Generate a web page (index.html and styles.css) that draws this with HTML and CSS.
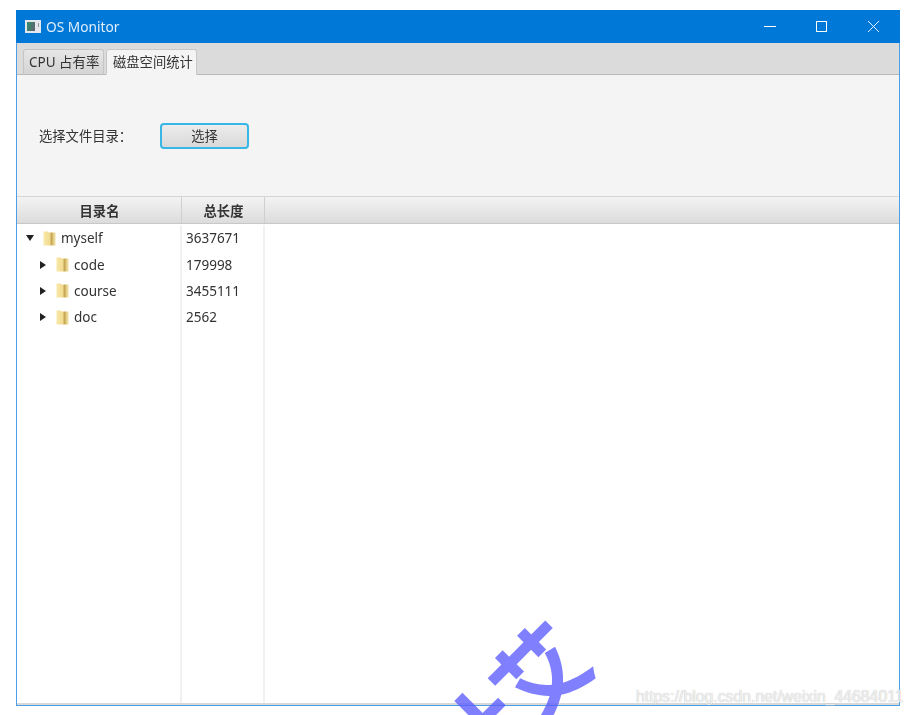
FILE: index.html
```html
<!DOCTYPE html>
<html lang="zh">
<head>
<meta charset="utf-8">
<title>OS Monitor</title>
<link rel="stylesheet" href="styles.css">
</head>
<body>
<svg width="0" height="0" class="defs">
  <defs>
    <linearGradient id="fold" x1="0" y1="0" x2="1" y2="0">
      <stop offset="0" stop-color="#f8e8a8"/>
      <stop offset="0.5" stop-color="#f2dc92"/>
      <stop offset="0.68" stop-color="#c4a452"/>
      <stop offset="0.85" stop-color="#e8d28c"/>
      <stop offset="1" stop-color="#f0e0a4"/>
    </linearGradient>
    <symbol id="folder" viewBox="0 0 13 15">
      <path d="M0.500 0.500h4l1 1h7v13h-12z" fill="url(#fold)"/>
    </symbol>
  </defs>
</svg>
<div class="window">
  <header class="titlebar">
    <svg class="app-icon" width="16" height="13" viewBox="0 0 16 13">
      <defs>
        <linearGradient id="scr" x1="0" y1="0" x2="1" y2="0.4">
          <stop offset="0" stop-color="#2e8f6c"/>
          <stop offset="1" stop-color="#5a6a72"/>
        </linearGradient>
      </defs>
      <rect width="16" height="13" fill="#e4e8ec"/>
      <rect x="2" y="2" width="8" height="9" fill="url(#scr)"/>
      <rect x="13" y="3" width="1" height="4" fill="#8a949c"/>
    </svg>
    <span class="app-title">OS Monitor</span>
    <div class="controls">
      <svg class="ctl" width="52" height="33" viewBox="0 0 52 33"><path d="M20 16.500h12" stroke="#fff" fill="none"/></svg>
      <svg class="ctl" width="52" height="33" viewBox="0 0 52 33"><rect x="20.500" y="11.500" width="10" height="10" stroke="#fff" fill="none"/></svg>
      <svg class="ctl" width="52" height="33" viewBox="0 0 52 33"><path d="M20 11l11 11M31 11l-11 11" stroke="#e4eef8" fill="none"/></svg>
    </div>
  </header>
  <nav class="tabbar">
    <div class="tab">CPU 占有率</div>
    <div class="tab tab-active">磁盘空间统计</div>
  </nav>
  <section class="panel">
    <span class="panel-label">选择文件目录：</span>
    <button class="btn">选择</button>
  </section>
  <div class="table-head">
    <div class="th col-a">目录名</div>
    <div class="th col-b">总长度</div>
    <div class="th col-c"></div>
  </div>
  <div class="table-body">
    <div class="row">
      <div class="cell col-a depth-0"><span class="arrow arrow-down"></span><svg class="ficon"><use href="#folder"/></svg><span>myself</span></div>
      <div class="cell col-b">3637671</div>
    </div>
    <div class="row">
      <div class="cell col-a depth-1"><span class="arrow arrow-right"></span><svg class="ficon"><use href="#folder"/></svg><span>code</span></div>
      <div class="cell col-b">179998</div>
    </div>
    <div class="row">
      <div class="cell col-a depth-1"><span class="arrow arrow-right"></span><svg class="ficon"><use href="#folder"/></svg><span>course</span></div>
      <div class="cell col-b">3455111</div>
    </div>
    <div class="row">
      <div class="cell col-a depth-1"><span class="arrow arrow-right"></span><svg class="ficon"><use href="#folder"/></svg><span>doc</span></div>
      <div class="cell col-b">2562</div>
    </div>
    <div class="row row-fill">
      <div class="cell col-a"></div>
      <div class="cell col-b"></div>
    </div>
  </div>
</div>
<div class="stamp stamp-a">艾</div>
<div class="stamp stamp-b">叶</div>
<div class="mark">https://blog.csdn.net/weixin_44684011</div>
</body>
</html>
```
FILE: styles.css
```css
html, body {
  margin: 0;
  height: 715px;
  overflow: hidden;
  background: #fff;
}
body {
  position: relative;
  font-family: "Noto Sans", "Noto Sans CJK SC", sans-serif;
  color: #333;
}
.defs { position: absolute; }
.window {
  box-sizing: border-box;
  width: 884px;
  height: 696px;
  margin: 10px 0 0 16px;
  display: flex;
  flex-direction: column;
  border: 1px solid #4a9fe6;
  border-top: 0;
  background: #fff;
  box-shadow: inset 0 -2px 0 #d8d8d8;
  filter: blur(0.45px);
}
.titlebar {
  height: 33px;
  flex: none;
  margin: 0 -1px;
  display: flex;
  align-items: center;
  background: #0078d7;
  color: #dfeefa;
  font-size: 13.700px;
}
.app-icon { margin: 0 5px 0 9px; }
.controls { margin-left: auto; display: flex; }
.ctl { display: block; }
.tabbar {
  height: 32px;
  flex: none;
  box-sizing: border-box;
  display: flex;
  align-items: flex-end;
  gap: 2px;
  padding-left: 6px;
  background: #dbdbdb;
  border-bottom: 1px solid #b9b9b9;
}
.tab {
  box-sizing: border-box;
  height: 26px;
  margin-bottom: -1px;
  display: flex;
  align-items: center;
  padding: 0 5px 2px;
  width: 81px;
  font-size: 13.500px;
  white-space: nowrap;
  background: linear-gradient(#e6e6e6, #d4d4d4);
  border: 1px solid #c4c4c4;
  border-bottom-color: #b9b9b9;
  border-radius: 3px 3px 0 0;
}
.tab-active {
  width: 91px;
  padding-left: 6px;
  font-size: 13.300px;
  background: #f4f4f4;
  border-color: #c8c8c8;
  border-bottom-color: #f4f4f4;
}
.panel {
  height: 122px;
  flex: none;
  box-sizing: border-box;
  display: flex;
  align-items: center;
  padding: 1px 0 0 22px;
  background: #f4f4f4;
  border-bottom: 1px solid #d4d4d4;
}
.panel-label {
  width: 121px;
  padding-bottom: 2px;
  font-size: 13.300px;
}
.btn {
  box-sizing: border-box;
  width: 89px;
  height: 26px;
  padding: 0 0 2px;
  font: 13.300px "Noto Sans", "Noto Sans CJK SC", sans-serif;
  color: #333;
  background: linear-gradient(#ececec, #d9d9d9);
  border: 2px solid #38b6e6;
  border-radius: 4px;
}
.table-head {
  height: 27px;
  flex: none;
  box-sizing: border-box;
  display: flex;
  background: linear-gradient(#f3f3f3, #dcdcdc);
  border-bottom: 1px solid #c8c8c8;
}
.th {
  box-sizing: border-box;
  display: flex;
  align-items: center;
  justify-content: center;
  padding-left: 1px;
  font-size: 13.300px;
  font-weight: 700;
  border-right: 1px solid #cfcfcf;
}
.col-a { width: 165px; }
.col-b { width: 83px; }
.col-c { flex: 1; border-right: 0; }
.table-body {
  flex: 1;
  display: flex;
  flex-direction: column;
  padding: 1px 0 2px;
}
.row {
  height: 26.400px;
  flex: none;
  display: flex;
}
.row-fill { flex: 1; height: auto; }
.cell {
  box-sizing: border-box;
  display: flex;
  align-items: center;
  font-size: 13.500px;
  border-right: 2px solid #f1f1f1;
}
.col-b.cell { padding-left: 4px; }
.depth-0 { padding-left: 9px; }
.depth-1 { padding-left: 23px; }
.arrow { display: block; width: 0; height: 0; border-style: solid; flex: none; }
.arrow-down {
  border-width: 6px 4.500px 0;
  border-color: #222 transparent transparent;
  margin-right: 9px;
}
.arrow-right {
  border-width: 4.500px 0 4.500px 6px;
  border-color: transparent transparent transparent #222;
  margin-right: 10px;
}
.ficon {
  width: 13px;
  height: 15px;
  flex: none;
  margin-right: 5px;
  filter: blur(0.5px);
}
.stamp {
  position: absolute;
  font-family: "Noto Sans CJK SC", sans-serif;
  font-weight: 700;
  font-size: 92px;
  line-height: 92px;
  width: 92px;
  height: 92px;
  text-align: center;
  color: rgba(92, 92, 255, 0.78);
  transform: rotate(-45deg);
}
.stamp-a { left: 491px; top: 624px; }
.stamp-b { left: 427px; top: 688px; }
.mark {
  position: absolute;
  left: 636px;
  top: 688px;
  font: 15.800px "Liberation Sans", sans-serif;
  white-space: nowrap;
  color: rgba(255, 255, 255, 0.8);
  text-shadow: 0 0 1px rgba(110, 110, 110, 0.6);
}
```
